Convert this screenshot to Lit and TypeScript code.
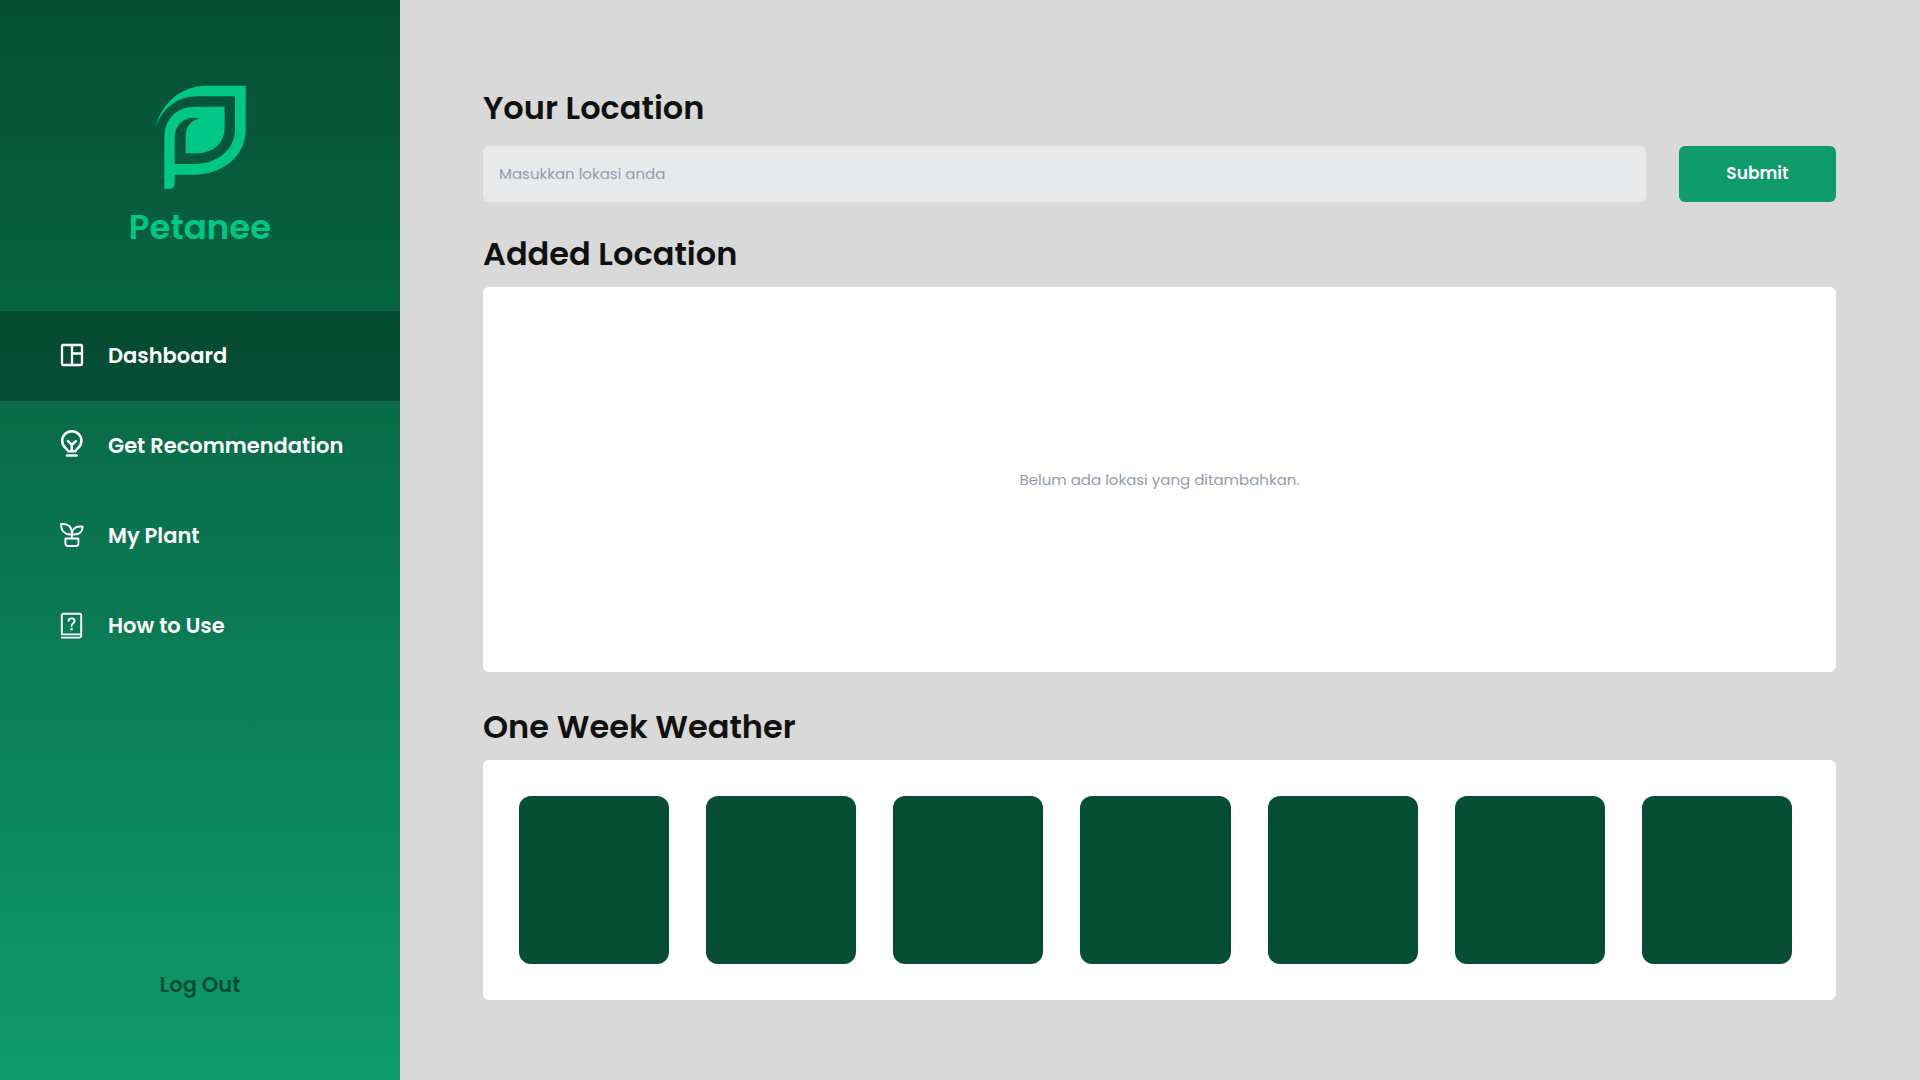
import { LitElement, html, css, svg } from "lit";
import { customElement, state } from "lit/decorators.js";

const icons = {
  dashboard: svg`<g stroke-width="2.3"><rect x="6" y="5" width="20" height="20" rx="1"/><path d="M16 5V25M16 13.5H26"/></g>`,
  bulb: svg`<g stroke-width="2.5"><path d="M12 21.2C11.600 20 10.600 19 9.400 17.900A9.600 9.600 0 1 1 22.200 17.900C21 19 20 20 19.600 21.200Z"/><path d="M12 11.2L15.8 14.8L19.8 11.2M15.8 14.8V21M11 25.6H20.6"/></g>`,
  plant: svg`<g stroke-width="1.9"><path d="M5 4H7.5C12.6 4 15.8 7.4 15.8 12V14.5H14C8.6 14.5 5 10.5 5 4Z"/><path d="M26.6 6.5H24C19 6.5 15.8 9.5 15.8 14.5H18C23.5 14.5 26.6 11.6 26.6 6.5ZM15.8 14V18"/><path d="M9.400 18.500H22.400V23.500A2.500 2.500 0 0 1 20 26H12A2.500 2.500 0 0 1 9.400 23.500Z"/></g>`,
  guide: svg`<g stroke-width="1.9"><path d="M5.8 24.400V5.500A1.700 1.700 0 0 1 7.500 3.800H23.500A1.700 1.700 0 0 1 25.200 5.500V24.400H5.800M25.200 24V26A1.700 1.700 0 0 1 23.500 27.600H5.800"/><path d="M12.600 10.800C12.800 7.500 18.600 7.600 18.600 11C18.600 13.300 15.600 13.300 15.600 16"/></g><circle cx="15.6" cy="19.200" r="1.200" fill="currentColor" stroke="none"/>`,
};

const links = [
  { label: "Dashboard", icon: icons.dashboard },
  { label: "Get Recommendation", icon: icons.bulb },
  { label: "My Plant", icon: icons.plant },
  { label: "How to Use", icon: icons.guide },
];

@customElement("app-sidebar")
class AppSidebar extends LitElement {
  static styles = css`
    :host {
      display: flex;
      flex-direction: column;
      color: #fff;
      background: linear-gradient(180deg, #054e33 0%, #0f9b6c 100%);
    }
    .brand {
      display: flex;
      flex-direction: column;
      align-items: center;
      height: 226px;
      padding-top: 85px;
      color: #00c785;
    }
    .mark {
      width: 92px;
      height: 104px;
    }
    .name {
      margin-top: 16px;
      font-size: 34px;
      line-height: 44px;
      font-weight: 600;
    }
    .link {
      display: flex;
      align-items: center;
      gap: 20px;
      height: 90px;
      padding-left: 56px;
      color: inherit;
      font-size: 21px;
      line-height: 30px;
      font-weight: 600;
      text-decoration: none;
    }
    .active {
      background: linear-gradient(180deg, #044a31, #064f36);
    }
    .icon {
      width: 32px;
      height: 32px;
      overflow: visible;
      fill: none;
      stroke: currentColor;
      stroke-linejoin: round;
      stroke-linecap: round;
    }
    .logout {
      margin: auto auto 80px;
      padding: 0;
      border: 0;
      background: none;
      color: #054e33;
      font-family: inherit;
      font-size: 21px;
      line-height: 30px;
      font-weight: 600;
      cursor: pointer;
    }
  `;

  @state() private current = "Dashboard";

  render() {
    return html`
      <div class="brand">
        <svg class="mark" viewBox="103 46 276 312" aria-hidden="true">
          <path fill="currentColor" d="M106 180C122 105 180 48 262 48H378V180C378 255 315 315 220 315H165V340Q165 358 147 358H134V205C134 150 168 111 228 111H315V172C315 222 280 251 230 251H198V200C198 168 214 150 242 147C200 135 165 160 165 205V283H220C300 283 346 235 346 180V80H235C170 80 125 118 106 180Z"/>
        </svg>
        <span class="name">Petanee</span>
      </div>
      <nav>
        ${links.map(
          (l) => html`<a
            class="link ${l.label === this.current ? "active" : ""}"
            href="#"
            @click=${() => (this.current = l.label)}
            ><svg class="icon" viewBox="0 0 32 32" aria-hidden="true">${l.icon}</svg>${l.label}</a
          >`
        )}
      </nav>
      <button class="logout" type="button">Log Out</button>
    `;
  }
}

@customElement("app-root")
class AppRoot extends LitElement {
  static styles = css`
    :host {
      display: grid;
      grid-template-columns: 400px 1fr;
      min-height: 100vh;
      background: #d9d9d9;
      color: #111;
      font-family: Poppins, Inter, sans-serif;
    }
    main {
      padding: 84px 84px 80px 83px;
    }
    h1,
    h2 {
      margin: 0;
      font-size: 32px;
      line-height: 48px;
      font-weight: 600;
    }
    .form {
      display: flex;
      gap: 33px;
      margin: 14px 0 28px;
    }
    .field {
      flex: 1;
      min-width: 0;
      box-sizing: border-box;
      height: 56px;
      padding: 0 16px 2px;
      border: 0;
      border-radius: 6px;
      background: #e8e9eb;
      color: #111;
      font-family: inherit;
      font-size: 15px;
    }
    .field::placeholder {
      color: #949cab;
      opacity: 1;
    }
    .submit {
      width: 157px;
      padding: 0 0 2px;
      border: 0;
      border-radius: 6px;
      background: #0f9b6c;
      color: #fff;
      font-family: inherit;
      font-size: 17px;
      font-weight: 600;
      cursor: pointer;
    }
    .panel {
      margin-top: 9px;
      border-radius: 6px;
      background: #fff;
    }
    .empty {
      display: grid;
      place-items: center;
      height: 385px;
      margin-bottom: 31px;
      color: #949cab;
      font-size: 15px;
    }
    .week {
      display: grid;
      grid-template-columns: repeat(7, 1fr);
      gap: 37px;
      padding: 36px 44px 36px 36px;
    }
    .day {
      height: 168px;
      border-radius: 12px;
      background: #054e33;
    }
  `;

  render() {
    return html`
      <app-sidebar></app-sidebar>
      <main>
        <h1><label for="location">Your Location</label></h1>
        <form class="form" @submit=${(e: Event) => e.preventDefault()}>
          <input class="field" id="location" type="text" placeholder="Masukkan lokasi anda" />
          <button class="submit" type="submit">Submit</button>
        </form>
        <h2>Added Location</h2>
        <section class="panel empty">Belum ada lokasi yang ditambahkan.</section>
        <h2>One Week Weather</h2>
        <section class="panel week">${Array.from({ length: 7 }, () => html`<div class="day"></div>`)}</section>
      </main>
    `;
  }
}
